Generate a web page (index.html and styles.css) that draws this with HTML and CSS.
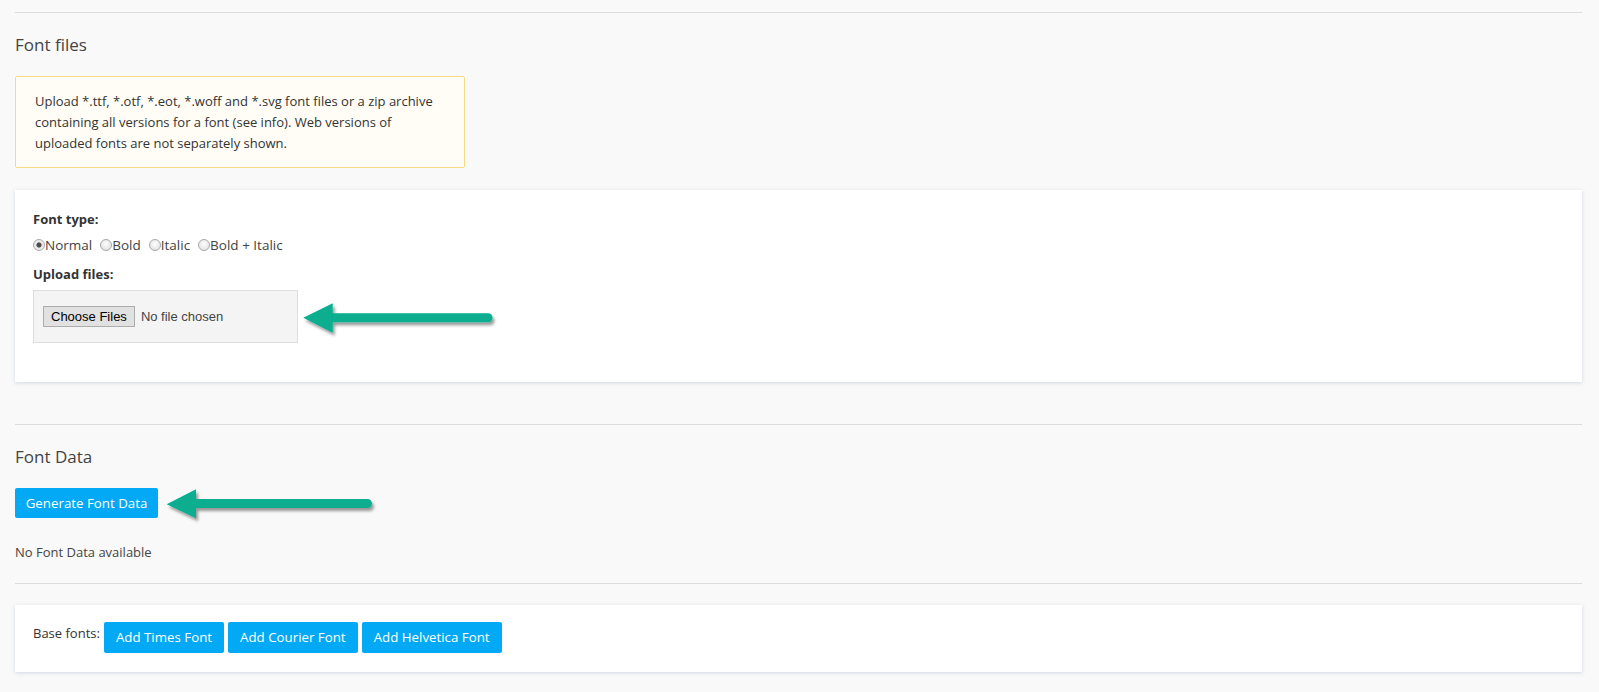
FILE: index.html
```html
<!DOCTYPE html>
<html lang="en">
<head>
<meta charset="utf-8">
<title>Font files</title>
<link rel="stylesheet" href="styles.css">
</head>
<body>
<div class="page">
  <section class="section section-files">
    <h2 class="section-title">Font files</h2>
    <div class="notice">Upload *.ttf, *.otf, *.eot, *.woff and *.svg font files or a zip archive containing all versions for a font (see info). Web versions of uploaded fonts are not separately shown.</div>
    <div class="card card-upload">
      <div class="field-label">Font type:</div>
      <div class="radios">
        <label class="radio"><input type="radio" name="ft" checked>Normal</label>
        <label class="radio"><input type="radio" name="ft">Bold</label>
        <label class="radio"><input type="radio" name="ft">Italic</label>
        <label class="radio"><input type="radio" name="ft">Bold + Italic</label>
      </div>
      <div class="field-label field-label-upload">Upload files:</div>
      <div class="filebox">
        <span class="choose-btn">Choose Files</span><span class="nofile">No file chosen</span>
      </div>
      <svg class="arrow arrow-upload" width="200" height="42" viewBox="0 0 200 42">
        <defs>
          <filter id="sh1" x="-10%" y="-40%" width="130%" height="200%">
            <feDropShadow dx="2" dy="3" stdDeviation="1.8" flood-color="#000" flood-opacity="0.4"/>
          </filter>
        </defs>
        <g filter="url(#sh1)" fill="#07ae8f" stroke="#07ae8f">
          <line x1="30" y1="19.8" x2="188" y2="19.8" stroke-width="9" stroke-linecap="round"/>
          <polygon points="3.3,19.7 32.7,5.3 32.7,34.7" stroke="none"/>
        </g>
      </svg>
    </div>
  </section>

  <section class="section section-data">
    <h2 class="section-title">Font Data</h2>
    <div class="gen-row">
      <button class="btn btn-generate">Generate Font Data</button>
    </div>
    <p class="empty">No Font Data available</p>
    <svg class="arrow arrow-generate" width="217" height="42" viewBox="0 0 217 42">
      <defs>
        <filter id="sh2" x="-10%" y="-40%" width="130%" height="200%">
          <feDropShadow dx="2" dy="3" stdDeviation="1.8" flood-color="#000" flood-opacity="0.4"/>
        </filter>
      </defs>
      <g filter="url(#sh2)" fill="#07ae8f" stroke="#07ae8f">
        <line x1="30" y1="18.6" x2="204.5" y2="18.6" stroke-width="9" stroke-linecap="round"/>
        <polygon points="3.7,19.3 33,4.3 33,33.3" stroke="none"/>
      </g>
    </svg>
  </section>

  <div class="section section-base">
    <div class="card card-base">
      <span class="base-label">Base fonts:</span>
      <button class="btn">Add Times Font</button>
      <button class="btn">Add Courier Font</button>
      <button class="btn">Add Helvetica Font</button>
    </div>
  </div>
</div>
</body>
</html>
```

FILE: styles.css
```css
html, body {
  margin: 0;
  padding: 0;
  background: #f9f9f9;
}

body {
  font-family: "Open Sans", "Noto Sans", sans-serif;
  font-size: 13px;
  color: #333;
}

.page {
  padding: 12px 17px 20px 15px;
}

.section {
  position: relative;
  border-top: 1px solid #dcdcdc;
}

.section-files {
  padding-bottom: 42px;
}

.section-title {
  margin: 20px 0 0;
  font-size: 17px;
  line-height: 24px;
  font-weight: 400;
  color: #444;
}

.notice {
  margin-top: 19px;
  width: 410px;
  padding: 14px 19px 14px;
  line-height: 20.8px;
  background: #fffdf6;
  border: 1px solid #f3dc82;
  border-radius: 2px;
  color: #333;
}

.card {
  position: relative;
  background: #fff;
  box-shadow: 0 1px 4px rgba(90, 120, 160, 0.25);
}

.card-upload {
  margin-top: 22px;
  padding: 20px 18px 39px;
}

.field-label {
  font-weight: 700;
  line-height: 19px;
  color: #333;
}

.field-label-upload {
  margin-top: 10px;
}

.radios {
  display: flex;
  gap: 8px;
  margin-top: 6px;
  line-height: 20px;
  font-size: 13.5px;
  color: #444;
}

.radio {
  display: flex;
  align-items: center;
}

.radio input {
  appearance: none;
  -webkit-appearance: none;
  margin: 0;
  width: 12px;
  height: 12px;
  border-radius: 50%;
  border: 1px solid #a9a9a9;
  background: radial-gradient(circle at 50% 40%, #fdfdfd 0%, #e6e6e6 70%, #d6d6d6 100%);
  box-sizing: border-box;
}

.radio input:checked {
  background: radial-gradient(circle, #444 0, #555 2.2px, #e8e8e8 3px, #f4f4f4 100%);
}

.filebox {
  margin-top: 6px;
  width: 245px;
  padding: 15px 9px;
  display: flex;
  align-items: center;
  background: #f4f4f4;
  border: 1px solid #dedede;
  font-family: "Liberation Sans", Arial, sans-serif;
  font-size: 13px;
}

.choose-btn {
  box-sizing: border-box;
  height: 21px;
  line-height: 19px;
  padding: 0 7px;
  background: #e1e1e1;
  border: 1px solid #adadad;
  color: #000;
}

.nofile {
  margin-left: 6px;
  color: #444;
}

.arrow {
  position: absolute;
  overflow: visible;
}

.arrow-upload {
  left: 285px;
  top: 108px;
}

.arrow-generate {
  left: 148px;
  top: 60px;
}

.gen-row {
  margin-top: 19px;
}

.btn {
  box-sizing: border-box;
  height: 31px;
  padding: 0 12px;
  border: none;
  border-radius: 2px;
  background: #03a9f4;
  color: #fff;
  font-family: "Open Sans", "Noto Sans", sans-serif;
  font-size: 13.3px;
  line-height: 31px;
  cursor: pointer;
}

.btn-generate {
  height: 30px;
  line-height: 30px;
  width: 143px;
  padding: 0;
}

.empty {
  margin: 24px 0 0;
  line-height: 20px;
  color: #444;
  padding-bottom: 21px;
}

.section-base {
  padding-top: 21px;
}

.card-base {
  display: flex;
  align-items: flex-start;
  gap: 4px;
  padding: 17px 18px 19px;
}

.base-label {
  margin-top: 1px;
  line-height: 20px;
  color: #333;
}
```
